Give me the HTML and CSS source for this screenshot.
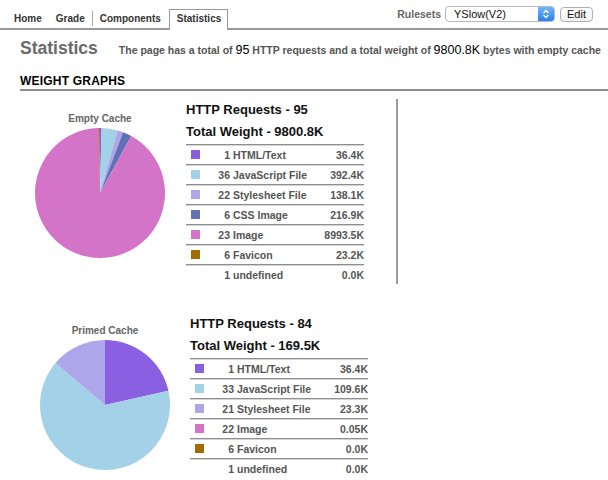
FILE: index.html
```html
<!DOCTYPE html>
<html>
<head>
<meta charset="utf-8">
<link rel="stylesheet" href="styles.css">
</head>
<body>
<div class="topbar">
  <nav class="tabs">
    <span class="tab">Home</span>
    <span class="tab">Grade</span>
    <span class="tab-sep"></span>
    <span class="tab">Components</span>
    <span class="tab tab-active">Statistics</span>
  </nav>
  <div class="tools">
    <span class="tools-label">Rulesets</span>
    <div class="select">
      <span class="select-value">YSlow(V2)</span>
      <span class="select-arrows">
        <svg width="8" height="10" viewBox="0 0 8 10"><path d="M1.5 4 L4 1.5 L6.5 4 M1.5 6 L4 8.5 L6.5 6" fill="none" stroke="#fff" stroke-width="1.3"/></svg>
      </span>
    </div>
    <span class="btn">Edit</span>
  </div>
</div>

<div class="title-row">
  <h1 class="title">Statistics</h1>
  <p class="summary">The page has a total of <b class="num">95</b> HTTP requests and a total weight of <b class="num">9800.8K</b> bytes with empty cache</p>
</div>

<h2 class="section-title">WEIGHT GRAPHS</h2>

<div class="graph graph-empty">
  <div class="pie-col">
    <div class="pie-label">Empty Cache</div>
    <svg class="pie" width="130" height="130" viewBox="0 0 130 130">
      <path d="M65,65 L65,0 A65,65 0 0 1 66.52,0.02 Z" fill="#8a60e0"/>
      <path d="M65,65 L66.52,0.02 A65,65 0 0 1 82.64,2.44 Z" fill="#a2d1e8"/>
      <path d="M65,65 L82.64,2.44 A65,65 0 0 1 88.10,4.25 Z" fill="#ada6eb"/>
      <path d="M65,65 L88.10,4.25 A65,65 0 0 1 96.30,8.03 Z" fill="#6271b6"/>
      <path d="M65,65 L96.30,8.03 A65,65 0 1 1 64.02,0.01 Z" fill="#d474c9"/>
      <path d="M65,65 L64.02,0.01 A65,65 0 0 1 65,0 Z" fill="#a36b00"/>
    </svg>
  </div>
  <div class="data-col data-col-ruled">
    <div class="data-head">HTTP Requests - 95</div>
    <div class="data-head data-head-second">Total Weight - 9800.8K</div>
    <div class="table">
      <div class="row"><span class="sw c-html"></span><span class="cnt">1</span><span class="name">HTML/Text</span><span class="size">36.4K</span></div>
      <div class="row"><span class="sw c-js"></span><span class="cnt">36</span><span class="name">JavaScript File</span><span class="size">392.4K</span></div>
      <div class="row"><span class="sw c-css"></span><span class="cnt">22</span><span class="name">Stylesheet File</span><span class="size">138.1K</span></div>
      <div class="row"><span class="sw c-cssimg"></span><span class="cnt">6</span><span class="name">CSS Image</span><span class="size">216.9K</span></div>
      <div class="row"><span class="sw c-img"></span><span class="cnt">23</span><span class="name">Image</span><span class="size">8993.5K</span></div>
      <div class="row"><span class="sw c-fav"></span><span class="cnt">6</span><span class="name">Favicon</span><span class="size">23.2K</span></div>
      <div class="row"><span class="sw"></span><span class="cnt">1</span><span class="name">undefined</span><span class="size">0.0K</span></div>
    </div>
  </div>
</div>

<div class="graph graph-primed">
  <div class="pie-col">
    <div class="pie-label">Primed Cache</div>
    <svg class="pie" width="130" height="130" viewBox="0 0 130 130">
      <path d="M65,65 L65,0 A65,65 0 0 1 128.43,50.80 Z" fill="#8a60e0"/>
      <path d="M65,65 L128.43,50.80 A65,65 0 1 1 15.48,22.90 Z" fill="#a2d1e8"/>
      <path d="M65,65 L15.48,22.90 A65,65 0 0 1 65,0 Z" fill="#ada6eb"/>
    </svg>
  </div>
  <div class="data-col">
    <div class="data-head">HTTP Requests - 84</div>
    <div class="data-head data-head-second">Total Weight - 169.5K</div>
    <div class="table">
      <div class="row"><span class="sw c-html"></span><span class="cnt">1</span><span class="name">HTML/Text</span><span class="size">36.4K</span></div>
      <div class="row"><span class="sw c-js"></span><span class="cnt">33</span><span class="name">JavaScript File</span><span class="size">109.6K</span></div>
      <div class="row"><span class="sw c-css"></span><span class="cnt">21</span><span class="name">Stylesheet File</span><span class="size">23.3K</span></div>
      <div class="row"><span class="sw c-img"></span><span class="cnt">22</span><span class="name">Image</span><span class="size">0.05K</span></div>
      <div class="row"><span class="sw c-fav"></span><span class="cnt">6</span><span class="name">Favicon</span><span class="size">0.0K</span></div>
      <div class="row"><span class="sw"></span><span class="cnt">1</span><span class="name">undefined</span><span class="size">0.0K</span></div>
    </div>
  </div>
</div>
</body>
</html>
```

FILE: styles.css
```css
html, body {
  margin: 0;
  padding: 0;
  background: #fff;
}
body {
  font-family: "Liberation Sans", Arial, sans-serif;
  color: #333;
  overflow: hidden;
}

/* top bar */
.topbar {
  display: flex;
  height: 28px;
  border-bottom: 2px solid #9a9a9a;
}
.tabs {
  display: flex;
  align-items: flex-end;
  padding-left: 7px;
}
.tab {
  display: block;
  padding: 0 7px;
  font-size: 10px;
  font-weight: bold;
  line-height: 18px;
  color: #333;
}
.tab-sep {
  display: block;
  width: 1px;
  height: 15px;
  margin-bottom: 2px;
  background: #aaa;
}
.tab-active {
  margin-left: 1px;
  padding: 0 6px 2px 7px;
  border: 1px solid #9a9a9a;
  border-bottom: none;
  margin-bottom: -2px;
  background: #fff;
}
.tools {
  margin-left: auto;
  display: flex;
  align-items: center;
  padding-right: 15px;
}
.tools-label {
  font-size: 10.5px;
  font-weight: bold;
  color: #666;
  margin-right: 4px;
}
.select {
  display: flex;
  width: 108px;
  height: 14px;
  border: 1px solid #b8b8b8;
  border-radius: 4px;
  background: #fff;
  overflow: hidden;
}
.select-value {
  flex: 1;
  padding-left: 8px;
  font-size: 11px;
  line-height: 14px;
  color: #111;
}
.select-arrows {
  width: 16px;
  display: flex;
  align-items: center;
  justify-content: center;
  background: linear-gradient(#6fb6fb, #2b7fe8);
}
.btn {
  margin-left: 5px;
  height: 13px;
  padding: 0 6px;
  border: 1px solid #b0b0b0;
  border-radius: 4px;
  font-size: 11px;
  line-height: 13px;
  color: #111;
  background: linear-gradient(#fff, #f1f1f1);
}

/* title row */
.title-row {
  display: flex;
  align-items: baseline;
  padding: 7px 0 0 20px;
}
.title {
  margin: 0;
  font-size: 17.5px;
  line-height: 22px;
  font-weight: bold;
  color: #6a6a6a;
}
.summary {
  margin: 0 0 0 21px;
  font-size: 10.5px;
  font-weight: bold;
  color: #555;
  white-space: nowrap;
}
.num {
  font-size: 12.5px;
  font-weight: normal;
  color: #000;
}

.section-title {
  margin: 15px 0 0 20px;
  font-size: 12px;
  line-height: 15px;
  letter-spacing: 0.2px;
  font-weight: bold;
  color: #000;
  border-bottom: 2px solid #8c8c8c;
}

/* graphs */
.graph {
  display: flex;
  margin-top: 8px;
  padding-left: 20px;
}
.graph-primed {
  margin-top: 29px;
}
.pie-col {
  width: 160px;
  margin-right: 6px;
  padding-top: 14px;
  display: flex;
  flex-direction: column;
  align-items: center;
}
.graph-primed .pie-col {
  width: 170px;
  margin-right: 0;
  padding-top: 12px;
}
.pie-label {
  font-size: 10px;
  line-height: 12px;
  font-weight: bold;
  color: #666;
}
.pie {
  display: block;
  margin-top: 3px;
}
.data-col {
  width: 210px;
  padding-top: 3px;
}
.data-col-ruled {
  border-right: 2px solid #9a9a9a;
}
.data-head {
  font-size: 13px;
  line-height: 16px;
  font-weight: bold;
  color: #111;
}
.data-head-second {
  margin-top: 6px;
}
.table {
  width: 178px;
  margin-top: 4px;
}
.row {
  display: grid;
  grid-template-columns: 19px 25px 1fr auto;
  align-items: center;
  height: 19px;
  border-top: 1px solid #8e8e8e;
  box-shadow: inset 0 1px 0 #d4d4d4;
  font-size: 10.5px;
  font-weight: bold;
  color: #555;
}
.sw {
  width: 9px;
  height: 9px;
  margin-left: 5px;
}
.cnt {
  text-align: right;
}
.name {
  padding-left: 3px;
}
.size {
  text-align: right;
}
.c-html { background: #8a60e0; }
.c-js { background: #a2d1e8; }
.c-css { background: #ada6eb; }
.c-cssimg { background: #6271b6; }
.c-img { background: #d474c9; }
.c-fav { background: #a36b00; }
```
